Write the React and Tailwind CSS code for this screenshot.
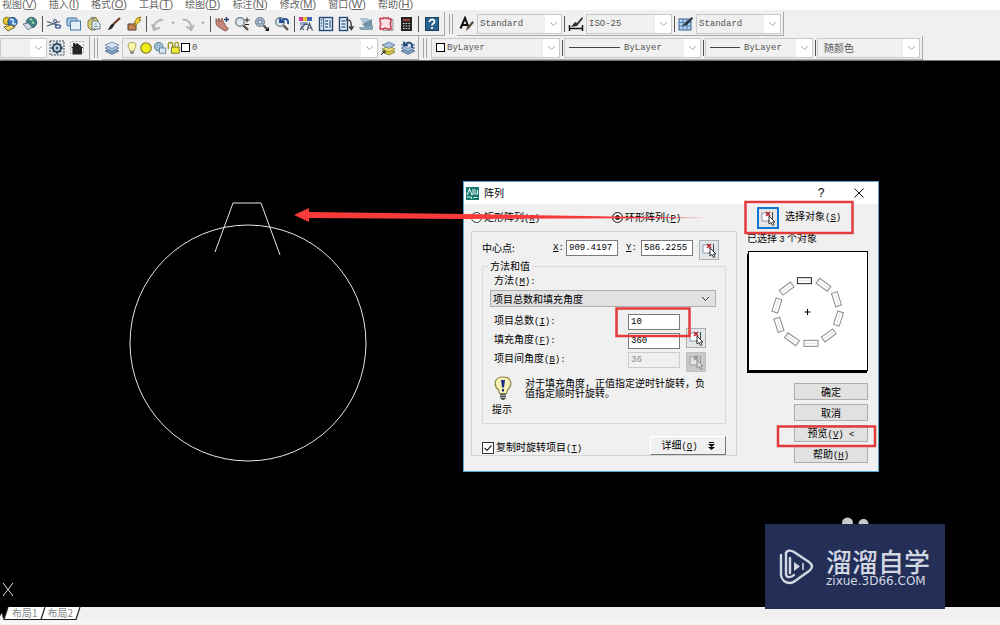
import React from 'react';
import clsx from 'clsx';

const cjk = "font-['Noto_Sans_CJK_SC',sans-serif]";
const mono = "font-['Liberation_Mono',monospace] text-[9px]";

const menus = [
  ['视图', 'V'], ['插入', 'I'], ['格式', 'O'], ['工具', 'T'], ['绘图', 'D'],
  ['标注', 'N'], ['修改', 'M'], ['窗口', 'W'], ['帮助', 'H'],
];

const magnifier = (
  <>
    <path d="M9.5 9.5 14 14" stroke="#5a5348" strokeWidth="2.4" />
    <circle cx="6" cy="6" r="4.3" fill="#dbe6ee" stroke="#6d7f8e" strokeWidth="1.3" />
  </>
);

const sheets = (
  <>
    <path d="m1 11 7-3 7 3-7 3.5z" fill="#7f9fc0" stroke="#4d6a86" strokeWidth=".7" />
    <path d="m1 8 7-3 7 3-7 3.5z" fill="#a5c0da" stroke="#4d6a86" strokeWidth=".7" />
    <path d="m1 5 7-3 7 3-7 3.5z" fill="#cfe0f0" stroke="#5d7d9c" strokeWidth=".7" />
  </>
);

const icons = {
  globePrint: (
    <>
      <circle cx="5" cy="5" r="3.8" fill="#e9c92f" stroke="#8a7418" />
      <circle cx="10.500" cy="6" r="4.6" fill="#3f7cc4" stroke="#23497c" />
      <path d="M8 4c2-1.500 4 0 3 2s1 2 3 2" stroke="#d7ebf8" strokeWidth="1.500" fill="none" />
      <path d="M2 11 9 9l4 2-7 4z" fill="#f1dc61" stroke="#6f6430" />
    </>
  ),
  globe: (
    <>
      <circle cx="9.500" cy="6.500" r="5.200" fill="#3f8280" stroke="#315c70" />
      <path d="M7 3c3-2 4 1 3 3s2 2 3 1" fill="#a9d9b4" />
      <path d="m1 8 5-1 4 4-4 3z" fill="#d5dde4" stroke="#6f7f92" />
    </>
  ),
  cut: (
    <>
      <path d="M1 5.500 11 9M1 10 14 5.500" stroke="#4e5b68" strokeWidth="1.300" />
      <ellipse cx="12" cy="10.500" rx="2.500" ry="1.600" fill="none" stroke="#34518a" strokeWidth="1.300" />
      <circle cx="9" cy="5" r="1.500" fill="none" stroke="#34518a" />
    </>
  ),
  copy: (
    <>
      <rect x="1" y="2" width="10" height="8" rx="1" fill="#a9c9e6" stroke="#3f6f9f" />
      <rect x="4.500" y="5" width="10" height="9" fill="#e4f0f9" stroke="#3f74a5" />
    </>
  ),
  paste: (
    <>
      <path d="M2 5 6 1.500h4L12 5v6l-3 3H5l-3-3z" fill="#ddd06f" stroke="#7b7340" />
      <path d="M5 1.500h4v2H5z" fill="#888" />
      <path d="M6 5h5l3 3v5H6z" fill="#eef4f7" stroke="#5b7787" />
      <path d="M8 8h3M8 10.500h4" stroke="#69a" />
    </>
  ),
  brush: (
    <>
      <path d="M7.500 8 14 2" stroke="#6b3b2a" strokeWidth="2.200" />
      <path d="M8.500 8.500C7 12 5 13.500 1.500 14c1.500-1.500 2-4 5-6.500z" fill="#222" />
    </>
  ),
  blockEdit: (
    <>
      <path d="M2 8h8v6H2z" fill="#c98558" stroke="#5b3a26" />
      <path d="m8 7 3-5 4-1-2 3h2L8 11l1.500-4z" fill="#f3d334" stroke="#866d11" strokeWidth=".8" />
    </>
  ),
  undo: <path d="M5 14C2.500 9 6 4.500 13 3.500M2 8l2 6 6-2.500" fill="none" stroke="#b4b4b4" strokeWidth="2" />,
  redo: <path d="M2.500 3.500c6 0 9 4 8.500 9.500M6.500 10.500 11 14l3-5" fill="none" stroke="#b4b4b4" strokeWidth="2" />,
  pan: (
    <>
      <path d="M2 2.500 5 6 4.500 2 7 5.500 8 2l1.500 4 2 3.500 3 3.500-3 2-5-2.500L2 8.500z" fill="#c78878" stroke="#7c4b46" strokeWidth=".8" />
      <path d="M12.500 1v5M10 3.500h5" stroke="#263d73" strokeWidth="1.300" />
    </>
  ),
  zoomRt: <>{magnifier}<path d="M13 1.500v5M10.500 4h5M11 8.500h4" stroke="#222" /></>,
  zoomWin: <>{magnifier}<path d="M4 4h4v4H4z" fill="none" stroke="#3f5e87" /><path d="M15 11v4h-4z" fill="#111" /></>,
  zoomPrev: <>{magnifier}<path d="M14 8c1-5-3-7-7-3M6 2v4h4" fill="none" stroke="#1f4d96" strokeWidth="1.800" /></>,
  props: (
    <>
      <path d="M1 1h4v4H1z" fill="#d3359a" /><path d="M5 1h4v4H5z" fill="#edc32c" /><path d="M9 1h5v4H9z" fill="#4565bd" />
      <path d="M2 6h8v3H2z" fill="#90a8c7" />
      <path d="m2 14 5-6 3 1M3 10l3 4M9 14.500l2.500-7 3 7M10 12h3.500" fill="none" stroke="#44536e" strokeWidth="1.200" />
    </>
  ),
  design: (
    <>
      <rect x="1.500" y="1.500" width="13" height="13" fill="#e1edf7" stroke="#274a6e" strokeWidth="1.400" />
      <path d="M5.500 2v12M3 4h1M3 7h1M3 10h1M7 5h3M7 8h3M7 11h3M12 4v8" stroke="#416c96" strokeWidth="1.300" />
    </>
  ),
  palette: (
    <>
      <rect x="1.500" y="1.500" width="8" height="13" fill="#e1edf7" stroke="#274a6e" strokeWidth="1.400" />
      <path d="M3.500 5h4M3.500 8h4M3.500 11h4" stroke="#416c96" strokeWidth="1.500" />
      <path d="M8 4c5-1 5 2 5.500 8M11 10.500l2.500 3L15.500 10" fill="none" stroke="#333" strokeWidth="1.300" />
    </>
  ),
  sheetSet: (
    <>
      <path d="M1 2h9l4 4-9 1z" fill="#b1c6d4" />
      <path d="m4 8 10-5v7l-6 2z" fill="#6e93a6" />
      <path d="M1 11h7l7-2v5H2z" fill="#8aa6b8" />
    </>
  ),
  markup: (
    <>
      <path d="M5 3.500h10v11H5z" fill="#ddd" stroke="#999" />
      <path d="M2 2.500h3l1-1 2 1 2-1 1 1.500h2v3l-1 2 1 2v3H9l-2-1-2 1H2v-3l1-2-1-2z" fill="#f9dfe3" stroke="#c92d44" strokeWidth="1.300" />
    </>
  ),
  calc: (
    <>
      <rect x="3" y="1" width="11" height="14" fill="#262323" />
      <path d="M5 3h7v2H5z" fill="#a04444" />
      <path d="M5 7.500h7M5 10h7M5 12.500h7" stroke="#ddd" strokeWidth="1.200" strokeDasharray="1.500 1.200" />
    </>
  ),
  help: (
    <>
      <rect x="1.500" y="1.500" width="13" height="13" fill="#29648f" stroke="#173f66" />
      <path d="M5.500 6c0-3.500 5.500-3.200 5 0-.3 1.500-2.500 1.500-2.500 3.500M8 11v2" fill="none" stroke="#fff" strokeWidth="1.800" />
    </>
  ),
  textStyle: (
    <>
      <path d="M1.500 12.500 6 2l3.500 9M3.500 9h5" fill="none" stroke="#111" strokeWidth="2" />
      <path d="m6.500 15 2-4.500 5-5.500 1.500 1.500-5 6z" fill="#5a4a38" />
    </>
  ),
  dimStyle: (
    <>
      <path d="M1.500 9v6M14.500 9v6M1 12.500h14" stroke="#111" strokeWidth="1.500" />
      <path d="m3 11 4-5 2 1 5-6 1 1.500L9 10z" fill="#353129" />
    </>
  ),
  tableStyle: (
    <>
      <rect x="1" y="3" width="12" height="11" fill="#b9d3ed" stroke="#335f91" />
      <path d="M1 6.500h12M1 10h12M5 3v11M9 3v11" stroke="#4a7fb5" />
      <path d="m4 10 4-4 6-5 1 1.500L9 9z" fill="#2c3440" />
    </>
  ),
  gear: (
    <>
      <rect x="1" y="1" width="14" height="14" fill="#dfe6ec" stroke="#43525f" strokeDasharray="2 1" />
      <circle cx="8" cy="8" r="4" fill="none" stroke="#35506a" strokeWidth="2" />
      <circle cx="8" cy="8" r="1.500" fill="#35506a" />
      <path d="M8 2v2.500M8 11.500V14M2 8h2.500M11.500 8H14M4 4l1.500 1.500M10.500 10.500 12 12M12 4l-1.500 1.500M4 12l1.500-1.500" stroke="#35506a" strokeWidth="1.400" />
    </>
  ),
  home: (
    <>
      <path d="M1.500 14V1.500h13v13" fill="none" stroke="#aaa" strokeDasharray="2 1.500" />
      <path d="M2 8 8 3l6.500 5H13v6.500H3.500V8zM4 3h2v3H4z" fill="#242424" />
    </>
  ),
  layers: sheets,
  layerState: (
    <>
      <path d="m2 12 7-3 6 3-6 3z" fill="#d9c73a" stroke="#766d24" strokeWidth=".7" />
      <path d="m2 9 7-3 6 3-6 3z" fill="#efe26a" stroke="#766d24" strokeWidth=".7" />
      <path d="m2 5 7-3 6 3-6 3.500z" fill="#a5c0da" stroke="#4d6a86" strokeWidth=".7" />
      <path d="m1 15 4-4M2.500 11H5v2.500" stroke="#222" fill="none" />
    </>
  ),
  layerPrev: <>{sheets}<path d="M12 8c1-6-4-7-7-3M4 1.500v4h4" fill="none" stroke="#1d4270" strokeWidth="1.700" /></>,
  bulb: (
    <>
      <path d="M8 1.500c-6 0-5 5.500-2.500 8v2h5v-2C13 7 14 1.500 8 1.500z" fill="#fcf6ad" stroke="#9b9247" />
      <path d="M6 12h4v2.500H6z" fill="#777" />
    </>
  ),
  sun: <circle cx="8" cy="8" r="6" fill="#f0ec1f" stroke="#7d7a1d" strokeWidth="1.300" />,
  freeze: (
    <>
      <circle cx="6.500" cy="6.500" r="5" fill="#9dbbd0" stroke="#5d7d94" />
      <rect x="7.500" y="8" width="7" height="6" fill="#dce8f0" stroke="#60809a" />
    </>
  ),
  lock: (
    <>
      <path d="M1.500 9V4c0-3 5-3 5 0v3" fill="none" stroke="#9a9a1a" strokeWidth="1.600" />
      <path d="M5 7h9v7H5z" fill="#ecea35" stroke="#6d6b1a" /><path d="M9 7V3c0-2 4-2 4 0v4" fill="none" stroke="#9a9a1a" strokeWidth="1.400" />
    </>
  ),
};

function Icon({ name, size = 16 }) {
  return (
    <svg width={size} height={size} viewBox="0 0 16 16" fill="none" aria-hidden="true" className="shrink-0">
      {icons[name]}
    </svg>
  );
}

function ToolButton({ name }) {
  return (
    <button type="button" aria-label={name} className="flex h-5 w-5 shrink-0 items-center justify-center">
      <Icon name={name} />
    </button>
  );
}

function DropArrow() {
  return (
    <svg width="10" height="5" viewBox="0 0 10 5" className="shrink-0" aria-hidden="true">
      <path d="M3 1h4L5 3.500z" fill="#aaa" />
    </svg>
  );
}

function Sep() {
  return (
    <div className="flex w-1 shrink-0 justify-center">
      <div className="h-4 w-px bg-[#555]" />
    </div>
  );
}

function Grip() {
  return (
    <div className="flex h-5 w-3 shrink-0 items-center justify-center gap-0.5">
      <div className="h-full w-px bg-[#a5a5a5]" />
      <div className="h-full w-px bg-[#a5a5a5]" />
    </div>
  );
}

function Strip({ children }) {
  return <div className="flex h-[24px] shrink-0 items-center border-r border-b border-[#a8a8a8]">{children}</div>;
}

function Chevron({ color = '#a9a9a9' }) {
  return (
    <svg width="9" height="6" viewBox="0 0 9 6" fill="none" aria-hidden="true">
      <path d="m1 1 3.500 3.500L8 1" stroke={color} />
    </svg>
  );
}

// toolbar drop-down, optionally with a swatch or line sample before the value
function Combo({ label, value, className, cjkText, children }) {
  return (
    <div className={clsx('flex h-5 shrink-0 items-center border border-[#c9c9c9] bg-[#f0f0f0]', className)}>
      {children}
      <select
        aria-label={label}
        className={clsx(
          'h-full min-w-0 flex-1 appearance-none bg-transparent text-[#555] outline-none',
          cjkText ? cjk + ' text-[10px]' : mono + ' pt-0.5'
        )}
      >
        <option>{value}</option>
      </select>
      <span className="pointer-events-none flex h-full w-4 shrink-0 items-center justify-center bg-white">
        <Chevron />
      </span>
    </div>
  );
}

function Caption({ text, hotkey, tail = '' }) {
  return (
    <span className="whitespace-nowrap">
      {text}
      <span className={mono}>(<u>{hotkey}</u>){tail}</span>
    </span>
  );
}

function PickIcon({ off }) {
  return (
    <svg width="18" height="18" viewBox="0 0 18 18" fill="none" aria-hidden="true">
      <path d="M10 4H3v8h7" fill={off ? '#e2e2e2' : '#fff'} stroke={off ? '#999' : '#8b97a4'} />
      <path d="M13.500 3v9H9" stroke={off ? '#999' : '#444'} />
      <path d="m7 3 4 4M11 3 7 7" stroke={off ? '#8d8d8d' : '#b3202a'} strokeWidth="1.500" />
      <path d="M10 7v8l2-1.500 1.500 3 1.500-.8-1.500-2.700H16z" fill={off ? '#ddd' : '#fff'} stroke={off ? '#888' : '#222'} strokeWidth=".9" />
    </svg>
  );
}

function PickButton({ label, off, focused }) {
  return (
    <button
      type="button"
      aria-label={label}
      disabled={off}
      className={clsx(
        'flex size-5 shrink-0 items-center justify-center border',
        focused && 'border-[#1178d2] bg-[#e5e5e5] ring-1 ring-[#1178d2]',
        off && 'border-[#bfbfbf] bg-[#c9c9c9]',
        !focused && !off && 'border-[#adadad] bg-[#e1e6ea]'
      )}
    >
      <PickIcon off={off} />
    </button>
  );
}

function Field({ id, value, off }) {
  return (
    <input
      id={id}
      defaultValue={value}
      disabled={off}
      className={clsx(
        'h-4 w-[52px] shrink-0 border px-0.5 outline-none',
        mono,
        off ? 'border-[#ccc] bg-[#f0f0f0] text-[#888]' : 'border-[#7a7a7a] bg-white text-black'
      )}
    />
  );
}

function Radio({ text, hotkey, checked }) {
  return (
    <label className="flex items-center gap-0.5">
      <input
        type="radio"
        name="kind"
        defaultChecked={checked}
        className="size-[11px] appearance-none rounded-full border border-[#333] bg-white checked:bg-[#222] checked:shadow-[inset_0_0_0_2px_white]"
      />
      <Caption text={text} hotkey={hotkey} />
    </label>
  );
}

function PushButton({ children }) {
  return (
    <button type="button" className="flex h-[17px] w-[74px] items-center justify-center border border-[#adadad] bg-[#e1e1e1]">
      {children}
    </button>
  );
}

function Preview() {
  return (
    <svg viewBox="0 0 121 122" className="w-full shrink-0" role="img" aria-label="预览">
      <path d="M0 3h2v117h118v2H0z" fill="#000" />
      <rect x="1.500" y=".5" width="119" height="119" fill="#fff" stroke="#000" />
      {Array.from({ length: 10 }, (_, i) => {
        const a = ((i * 36 - 96) * Math.PI) / 180;
        const x = 60.7 + 31.5 * Math.cos(a);
        const y = 61 + 31.5 * Math.sin(a);
        return (
          <g key={i} transform={`translate(${x} ${y}) rotate(${i * 36})`}>
            <rect x="-7" y="-3" width="14" height="6" fill="none" stroke={i === 0 ? '#222' : '#8a8a8a'} />
            <path d="M-6 0H6" stroke="#e2e2e2" />
          </g>
        );
      })}
      <path d="M57.500 61h6M60.500 58v6" stroke="#000" />
    </svg>
  );
}

function TipBulb() {
  return (
    <svg width="18" height="25" viewBox="0 0 18 25" fill="none" aria-hidden="true">
      <path d="M9 1C-1 1 0 10 4.500 14l1 3.500h7l1-3.500C18 10 19 1 9 1z" fill="#f5f2b4" stroke="#8b8646" strokeWidth="1.200" />
      <path d="M7 4h4L10 11.500H8zM8 13h2v2.500H8z" fill="#1c2c8c" />
      <path d="M6 18h6v4l-2 2H8l-2-2z" fill="#555" />
      <path d="M6 19.500h6M6 21.500h6" stroke="#bbb" strokeWidth=".8" />
    </svg>
  );
}

function ArrayDialog() {
  return (
    <div
      role="dialog"
      aria-label="阵列"
      className={clsx('absolute top-[120px] left-[463px] w-[416px] border border-[#58a5cf] bg-[#f0f0f0] text-[10px] leading-3 text-black', cjk)}
    >
      <div className="flex h-[22px] items-center bg-white pl-0.5">
        <svg width="13" height="13" viewBox="0 0 13 13" fill="none" aria-hidden="true">
          <rect width="13" height="13" fill="#15796e" />
          <path d="m1 8 2.500-6L6 8M7 2v6M9 2v5h2.500V3M1 10h4l1 2M7.500 10.500h4" stroke="#d4efe9" strokeWidth="1.100" />
        </svg>
        <span className="ml-[5px] flex-1">阵列</span>
        <button type="button" aria-label="帮助" className="w-[38px] font-['Liberation_Sans',sans-serif] text-[12px]">?</button>
        <button type="button" aria-label="关闭" className="flex w-[38px] justify-center">
          <svg width="10" height="10" viewBox="0 0 10 10" fill="none"><path d="m.5.5 9 9M9.500.5l-9 9" stroke="#111" /></svg>
        </button>
      </div>

      <div className="flex">
        <div className="min-w-0 flex-1 pl-[7px]">
          <div className="grid h-[27px] grid-cols-[141px_1fr] items-center">
            <Radio text="矩形阵列" hotkey="R" />
            <Radio text="环形阵列" hotkey="P" checked />
          </div>

          <div className="border border-[#d4d4d4] px-2.5 pt-2">
            <div className="flex items-start">
              <span className="w-[71px] pt-0.5">中心点:</span>
              <label htmlFor="cx" className={clsx('w-[13px] pt-0.5', mono)}><u>X</u>:</label>
              <Field id="cx" value="909.4197" />
              <label htmlFor="cy" className={clsx('ml-2 w-[15px] pt-0.5', mono)}><u>Y</u>:</label>
              <Field id="cy" value="586.2255" />
              <div className="ml-1.5"><PickButton label="拾取中心点" /></div>
            </div>

            <fieldset className="border border-[#d9d9d9] px-[7px] pb-2">
              <legend className="ml-[-2px] px-0.5">方法和值</legend>
              <label htmlFor="method" className="block h-[18px] pt-0.5 pl-1"><Caption text="方法" hotkey="M" tail=":" /></label>
              <div className="-mr-0.5 flex h-[17px] max-w-[226px] items-center border border-[#adadad] bg-[#e1e1e1]">
                <select id="method" className="h-full min-w-0 flex-1 appearance-none bg-transparent pl-0.5 outline-none">
                  <option>项目总数和填充角度</option>
                </select>
                <span className="flex w-3.5"><Chevron color="#333" /></span>
              </div>

              <div className="flex pt-[7px] pb-0.5">
                <div className="grid auto-rows-[16px] grid-cols-[134px_52px] items-start gap-y-[3px] pl-1">
                  <label htmlFor="total"><Caption text="项目总数" hotkey="I" tail=":" /></label>
                  <Field id="total" value="10" />
                  <label htmlFor="fill"><Caption text="填充角度" hotkey="F" tail=":" /></label>
                  <Field id="fill" value="360" />
                  <label htmlFor="between"><Caption text="项目间角度" hotkey="B" tail=":" /></label>
                  <Field id="between" value="36" off />
                </div>
                <div className="flex flex-col gap-1 pt-3.5 pl-1.5">
                  <PickButton label="拾取填充角度" />
                  <PickButton label="拾取项目间角度" off />
                </div>
              </div>

              <div className="flex pt-0.5">
                <div className="flex w-[35px] flex-col gap-0.5 pl-0.5">
                  <span className="pl-0.5"><TipBulb /></span>
                  <span>提示</span>
                </div>
                <p className="w-[186px] pt-0.5 leading-[10px]">对于填充角度，正值指定逆时针旋转，负值指定顺时针旋转。</p>
              </div>
            </fieldset>

            <div className="flex items-end justify-between pt-3">
              <label className="flex items-center gap-0.5">
                <span className="grid">
                  <input type="checkbox" defaultChecked className="col-start-1 row-start-1 size-3 appearance-none border border-[#333] bg-white" />
                  <svg viewBox="0 0 12 12" fill="none" className="pointer-events-none col-start-1 row-start-1 size-3">
                    <path d="m2.500 6 2.500 2.500L9.500 3.500" stroke="#222" strokeWidth="1.200" />
                  </svg>
                </span>
                <Caption text="复制时旋转项目" hotkey="T" />
              </label>
              <button type="button" className="flex h-[19px] w-[76px] items-center justify-center gap-2.5 border border-t-white border-r-[#777] border-b-[#777] border-l-white bg-[#f0f0f0]">
                <Caption text="详细" hotkey="O" />
                <svg width="7" height="8" viewBox="0 0 7 8" aria-hidden="true"><path d="M1 0h5v1H1zM0 2h7L3.500 5zM0 5h7L3.500 8z" /></svg>
              </button>
            </div>
          </div>
        </div>

        <div className="flex w-[141px] flex-col px-2.5 pt-1 pb-2">
          <div className="flex h-5 pl-[11px]">
            <PickButton label="选择对象" focused />
            <span className="pt-0.5 pl-[7px]"><Caption text="选择对象" hotkey="S" /></span>
          </div>
          <p className="h-[23px] pt-1">已选择 <span className={mono}>3</span> 个对象</p>
          <Preview />
          <div className="flex flex-col items-end gap-1 pt-2.5">
            <PushButton>确定</PushButton>
            <PushButton>取消</PushButton>
            <PushButton><Caption text="预览" hotkey="V" tail=" <" /></PushButton>
            <PushButton><Caption text="帮助" hotkey="H" /></PushButton>
          </div>
        </div>
      </div>
    </div>
  );
}

// red arrow and frames drawn over the window
function Marks() {
  return (
    <svg width="1000" height="500" viewBox="0 0 1000 500" fill="none" className="pointer-events-none absolute top-0 left-0" aria-hidden="true">
      <path d="m294 215 15-7v4l156 2 242 4-242 1-156-1v4z" fill="#f93a3a" />
      <g stroke="#e23b3b" strokeWidth="2.500">
        <rect x="745.500" y="202" width="107" height="31" />
        <rect x="616.500" y="308.500" width="73" height="27.500" />
        <rect x="778" y="426.500" width="97" height="19.500" />
      </g>
    </svg>
  );
}

function Watermark() {
  return (
    <div className="absolute right-[55px] bottom-4 flex h-[85px] w-[180px] items-center bg-[#232f57] pl-3.5 text-[#d3d7e2]">
      <svg width="35" height="36" viewBox="0 0 35 36" fill="none" stroke="currentColor" strokeWidth="2.400" className="shrink-0" aria-hidden="true">
        <path d="M11 24V9" strokeLinecap="round" />
        <path d="M7 4c1-3 5-3 8-1l15 10c4 3 4 6 0 9L16 32c-4 3-8 2-11 0-2-2-3-3-3-6V6" strokeLinecap="round" />
        <path d="M7 4v21c0 4 5 4 8 1" strokeLinecap="round" />
        <path d="m15 13 6 4.500-6 4.500z" fill="currentColor" stroke="none" />
        <path d="M24 14v7" strokeWidth="1.600" />
      </svg>
      <div className="pl-3">
        <div className={clsx('text-[26px] leading-7 font-medium', cjk)}>溜溜自学</div>
        <div className="font-['DejaVu_Sans',sans-serif] text-[12px] leading-3">zixue.3D66.COM</div>
      </div>
    </div>
  );
}

export default function App() {
  return (
    <div className="relative flex h-screen flex-col overflow-hidden bg-[#f0f0f0]">
      <nav className={clsx('flex h-2.5 shrink-0 items-end gap-3 bg-white pl-0.5 text-[10px] leading-3 text-[#666]', cjk)}>
        {menus.map(([text, key]) => (
          <button key={key} type="button" className="whitespace-nowrap">
            {text}
            <span className="font-['Liberation_Sans',sans-serif] text-[11px]">(<u>{key}</u>)</span>
          </button>
        ))}
      </nav>

      <div className="flex shrink-0 items-center pt-0.5">
        <Strip>
          <ToolButton name="globePrint" />
          <ToolButton name="globe" />
          <Sep />
          <ToolButton name="cut" />
          <ToolButton name="copy" />
          <ToolButton name="paste" />
          <ToolButton name="brush" />
          <ToolButton name="blockEdit" />
          <Sep />
          <ToolButton name="undo" />
          <DropArrow />
          <ToolButton name="redo" />
          <DropArrow />
          <Sep />
          <ToolButton name="pan" />
          <ToolButton name="zoomRt" />
          <ToolButton name="zoomWin" />
          <ToolButton name="zoomPrev" />
          <Sep />
          <ToolButton name="props" />
          <ToolButton name="design" />
          <ToolButton name="palette" />
          <ToolButton name="sheetSet" />
          <ToolButton name="markup" />
          <ToolButton name="calc" />
          <Sep />
          <div className="px-0.5"><ToolButton name="help" /></div>
        </Strip>
        <Grip />
        <Strip>
          <ToolButton name="textStyle" />
          <Combo label="文字样式" value="Standard" className="w-[85px] pl-0.5" />
          <Sep />
          <ToolButton name="dimStyle" />
          <Combo label="标注样式" value="ISO-25" className="w-[86px] pl-0.5" />
          <Sep />
          <ToolButton name="tableStyle" />
          <Combo label="表格样式" value="Standard" className="mr-0.5 w-[85px] pl-0.5" />
        </Strip>
      </div>

      <div className="flex shrink-0 items-center border-b border-[#777]">
        <Strip>
          <Combo label="工作空间" value="" className="w-[47px]" />
          <ToolButton name="gear" />
          <div className="pr-0.5"><ToolButton name="home" /></div>
        </Strip>
        <Grip />
        <Strip>
          <ToolButton name="layers" />
          <Combo label="图层" value="0" className="w-[256px] pl-0.5">
            <Icon name="bulb" size={14} />
            <Icon name="sun" size={14} />
            <Icon name="freeze" size={14} />
            <Icon name="lock" size={14} />
            <span className="mr-0.5 size-[9px] shrink-0 border border-black bg-white" />
          </Combo>
          <ToolButton name="layerState" />
          <ToolButton name="layerPrev" />
        </Strip>
        <Grip />
        <Strip>
          <Combo label="颜色" value="ByLayer" className="w-[129px] gap-0.5 pl-1">
            <span className="size-[9px] shrink-0 border border-black bg-white" />
          </Combo>
          <Sep />
          <Combo label="线型" value="ByLayer" className="w-[137px] gap-1 pl-1">
            <span className="h-px w-[51px] shrink-0 bg-[#444]" />
          </Combo>
          <Sep />
          <Combo label="线宽" value="ByLayer" className="w-[108px] gap-1 pl-1">
            <span className="h-px w-[30px] shrink-0 bg-[#444]" />
          </Combo>
          <Sep />
          <Combo label="打印样式" value="随颜色" cjkText className="mr-0.5 w-[103px] pl-1.5" />
        </Strip>
      </div>

      <main className="relative min-h-0 flex-1 bg-black">
        <svg width="400" height="420" viewBox="0 61 400 420" fill="none" stroke="#e8e8e8" className="absolute top-0 left-0" aria-hidden="true">
          <circle cx="248" cy="343" r="118" />
          <path d="m215 252 18-49h28l19 52" />
        </svg>
        <svg width="12" height="15" viewBox="0 0 12 15" fill="none" className="absolute bottom-2.5 left-0.5" aria-hidden="true">
          <path d="m1 1 10 13M11 1 1 14" stroke="#ddd" />
        </svg>
        <svg width="30" height="10" viewBox="0 0 30 10" fill="#c9c9c9" className="absolute right-[130px] bottom-20" aria-hidden="true">
          <circle cx="7.500" cy="6" r="5.500" /><circle cx="23.500" cy="7" r="5" />
        </svg>
        <ArrayDialog />
      </main>

      <footer className="relative h-[18px] shrink-0 border-b-4 border-[#f6f6f6]">
        <svg width="84" height="13" viewBox="0 0 84 13" className="absolute top-0 left-0" aria-hidden="true">
          <path d="M3 12.500 8 0h72l-4 12.500z" fill="#fff" />
          <path d="M0 0h8L5 9l-2 3-1-6-2 3z" fill="#000" />
          <path d="M8 0 4 12.500h72L80 0M41 12.500 45 0" fill="none" stroke="#222" strokeWidth="1.200" />
        </svg>
        <div className={clsx('relative flex gap-2.5 pl-3 text-[10px] leading-3 text-[#888]', cjk)}>
          <button type="button">布局1</button>
          <button type="button">布局2</button>
        </div>
      </footer>

      <Marks />
      <Watermark />
    </div>
  );
}
